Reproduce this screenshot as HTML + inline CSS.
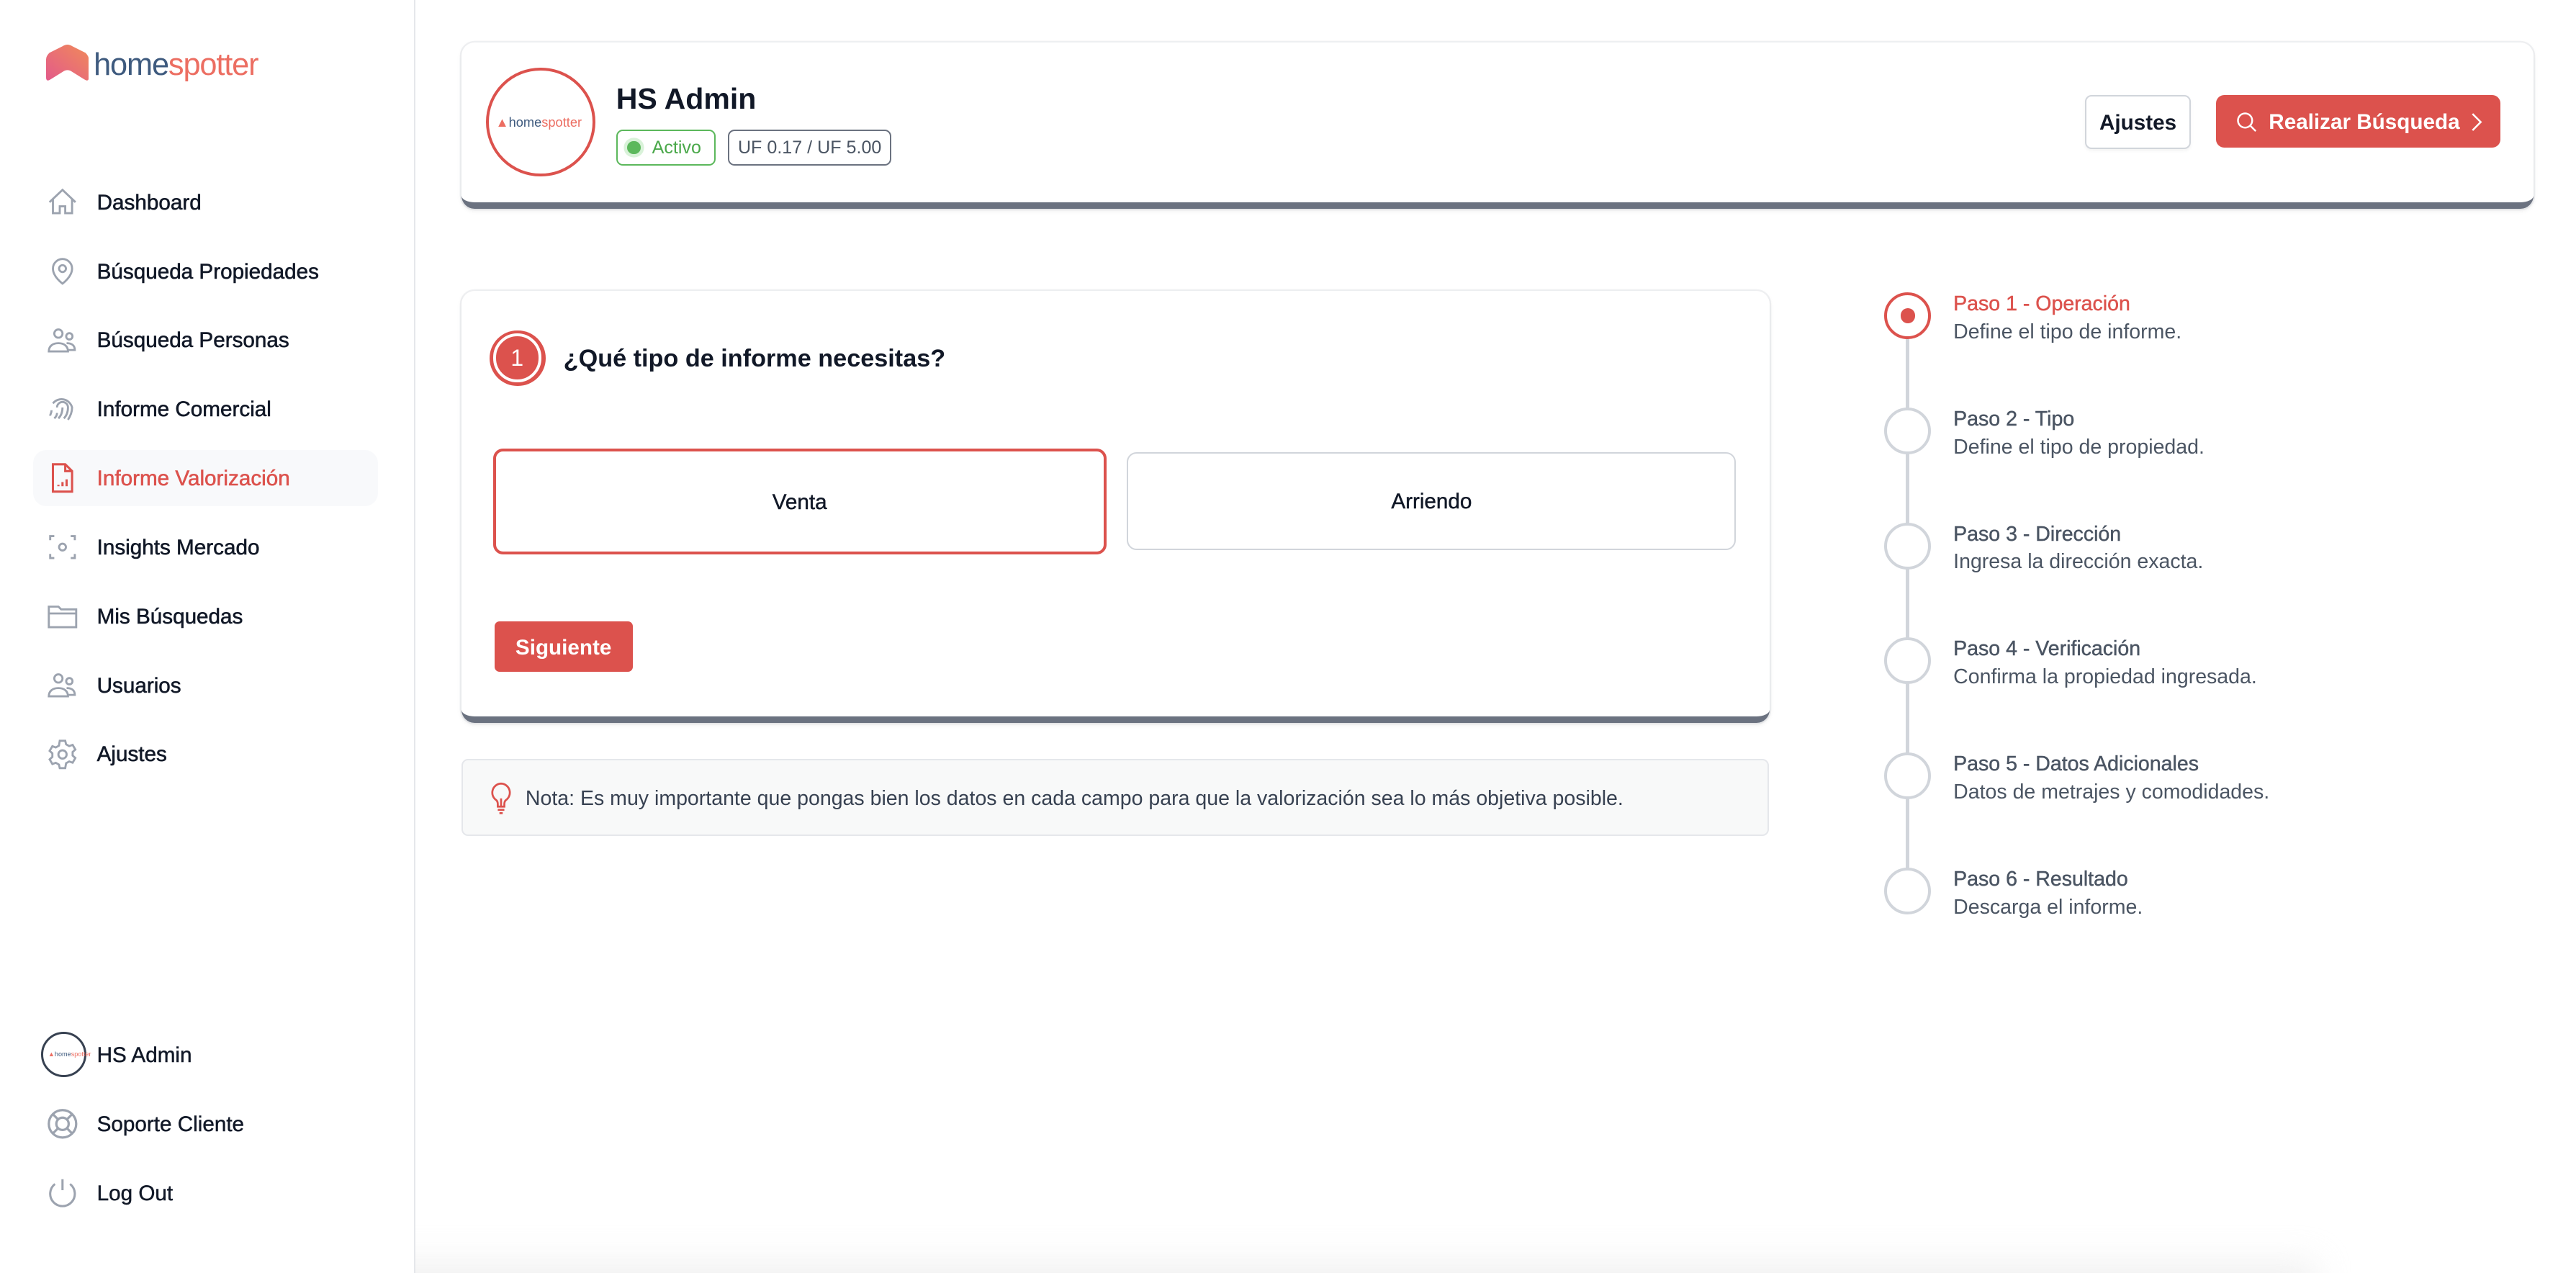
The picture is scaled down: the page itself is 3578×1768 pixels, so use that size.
<!DOCTYPE html>
<html><head><meta charset="utf-8">
<style>
html,body{margin:0;padding:0;background:#fff;width:3578px;height:1768px;overflow:hidden}
#r{zoom:2.2819;width:1568px;height:775px;position:relative;font-family:"Liberation Sans",Arial,sans-serif;color:#111827}
.abs{position:absolute}
.side{left:0;top:0;width:252px;height:775px;border-right:1px solid #e5e7eb;background:#fff}
.nav{position:absolute;left:20px;width:210px;height:34px;display:flex;align-items:center;border-radius:8px;font-size:13px;font-weight:400;color:#111827;-webkit-text-stroke:0.25px #111827}
.nav svg{position:absolute;left:8px;top:7px}
.nav span{position:absolute;left:39px;top:10px}
.nav.act{background:#f8f9fb;color:#dc524d;-webkit-text-stroke:0.25px #dc524d}
.card{background:#fff;border-radius:8px;box-shadow:0 1px 3px rgba(0,0,0,.08),0 0 0 1px #f1f2f4;border-bottom:4px solid #6b7280}
.step{position:absolute;left:1147px;width:300px;height:40px}
.step .c{position:absolute;left:0;top:0;width:25px;height:25px;border:2px solid #d1d5db;border-radius:50%;background:#fff}
.step .t{position:absolute;left:42px;top:-3px;font-size:12.5px;font-weight:500;color:#4b5563;white-space:nowrap;-webkit-text-stroke:0.2px #4b5563}
.step .d{position:absolute;left:42px;top:14px;font-size:12.5px;color:#4b5563;white-space:nowrap}
</style></head><body><div id="r">
<div class="abs" style="left:170px;top:768px;width:1240px;height:30px;background:#e8e8e8;filter:blur(10px);opacity:.6"></div>
<div class="abs side">
  <svg class="abs" style="left:28px;top:27px" width="26" height="24" viewBox="0 0 26 24"><defs><linearGradient id="g" x1="0" y1="1" x2="1" y2="0"><stop offset="0" stop-color="#e35a8a"/><stop offset="1" stop-color="#f08a5a"/></linearGradient></defs><path d="M0 9 Q0 7 2 5 L10 1 Q13 -1 16 1 L24 5 Q26 7 26 9 L26 20 Q26 23 23 21 L15 16 Q13 15 11 16 L3 21 Q0 23 0 20Z" fill="url(#g)"/></svg>
  <div class="abs" style="left:57px;top:29px;font-size:19px;letter-spacing:-.5px"><span style="color:#3e5a7e">home</span><span style="color:#ec6e62">spotter</span></div>

  <div class="nav" style="top:106px"><svg width="20" height="20" viewBox="0 0 24 24" fill="none" stroke="#9ca3af" stroke-width="1.5"><path d="M2.5 12 12 3l9.5 9M5 10v10h5v-5h4v5h5V10"/></svg><span>Dashboard</span></div>
  <div class="nav" style="top:148px"><svg width="20" height="20" viewBox="0 0 24 24" fill="none" stroke="#9ca3af" stroke-width="1.5"><path d="M12 21s-7-5-7-11a7 7 0 0 1 14 0c0 6-7 11-7 11z"/><circle cx="12" cy="10" r="2.5"/></svg><span>Búsqueda Propiedades</span></div>
  <div class="nav" style="top:190px"><svg width="20" height="20" viewBox="0 0 24 24" fill="none" stroke="#9ca3af" stroke-width="1.5"><circle cx="9" cy="7" r="3"/><circle cx="17" cy="9" r="2.3"/><path d="M2 20c0-4 3-6 7-6s7 2 7 6zM15 14c3 0 6 1 6 5h-5"/></svg><span>Búsqueda Personas</span></div>
  <div class="nav" style="top:232px"><svg width="20" height="20" viewBox="0 0 24 24" fill="none" stroke="#9ca3af" stroke-width="1.5"><path d="M5 8a8 8 0 0 1 14 3c0 3-1 6-3 9M8 11a4 4 0 0 1 8 0c0 3-1 6-3 8M12 11c0 3-1 6-3 8M4 13c0 2-1 3-1 4M8 15c0 2-1 3-2 4"/></svg><span>Informe Comercial</span></div>
  <div class="nav act" style="top:274px"><svg width="20" height="20" viewBox="0 0 24 24" fill="none" stroke="#dc524d" stroke-width="1.6"><path d="M5 2h9l5 5v15H5zM14 2v5h5"/><path d="M9 18v-1M12 18v-3M15 18v-5"/></svg><span>Informe Valorización</span></div>
  <div class="nav" style="top:316px"><svg width="20" height="20" viewBox="0 0 24 24" fill="none" stroke="#9ca3af" stroke-width="1.5"><path d="M3 7V4h3M18 4h3v3M21 17v3h-3M6 20H3v-3"/><circle cx="12" cy="12" r="2.5"/></svg><span>Insights Mercado</span></div>
  <div class="nav" style="top:358px"><svg width="20" height="20" viewBox="0 0 24 24" fill="none" stroke="#9ca3af" stroke-width="1.5"><path d="M2 5h7l2 2h11v13H2zM2 10h20"/></svg><span>Mis Búsquedas</span></div>
  <div class="nav" style="top:400px"><svg width="20" height="20" viewBox="0 0 24 24" fill="none" stroke="#9ca3af" stroke-width="1.5"><circle cx="9" cy="7" r="3"/><circle cx="17" cy="9" r="2.3"/><path d="M2 20c0-4 3-6 7-6s7 2 7 6zM15 14c3 0 6 1 6 5h-5"/></svg><span>Usuarios</span></div>
  <div class="nav" style="top:442px"><svg width="20" height="20" viewBox="0 0 24 24" fill="none" stroke="#9ca3af" stroke-width="1.5"><path d="M10 2h4l.6 2.6 2.3 1.3 2.5-.9 2 3.4-2 1.8v2.6l2 1.8-2 3.4-2.5-.9-2.3 1.3L14 22h-4l-.6-2.6-2.3-1.3-2.5.9-2-3.4 2-1.8v-2.6l-2-1.8 2-3.4 2.5.9 2.3-1.3z"/><circle cx="12" cy="12" r="3"/></svg><span>Ajustes</span></div>

  <div class="abs" style="left:25px;top:628px;width:25px;height:25px;border:1.5px solid #374151;border-radius:50%;background:#fff"><div style="position:absolute;left:3px;top:10px;font-size:4px;white-space:nowrap"><span style="color:#ec6e62">▲</span><span style="color:#3e5a7e">home</span><span style="color:#ec6e62">spotter</span></div></div>
  <div class="abs" style="left:59px;top:635px;font-size:13px;-webkit-text-stroke:0.2px #111827">HS Admin</div>
  <svg class="abs" style="left:28px;top:674px" width="20" height="20" viewBox="0 0 24 24" fill="none" stroke="#9ca3af" stroke-width="1.7"><circle cx="12" cy="12" r="10"/><circle cx="12" cy="12" r="4.5"/><path d="M5 5l4 4M19 5l-4 4M5 19l4-4M19 19l-4-4"/></svg>
  <div class="abs" style="left:59px;top:677px;font-size:13px;-webkit-text-stroke:0.2px #111827">Soporte Cliente</div>
  <svg class="abs" style="left:28px;top:716px" width="20" height="20" viewBox="0 0 24 24" fill="none" stroke="#9ca3af" stroke-width="1.6"><path d="M12 2v8M6.5 5.5a9 9 0 1 0 11 0"/></svg>
  <div class="abs" style="left:59px;top:719px;font-size:13px;-webkit-text-stroke:0.2px #111827">Log Out</div>
</div>

<div class="abs card" style="left:281px;top:26px;width:1261px;height:97px">
  <div class="abs" style="left:15px;top:15px;width:63px;height:63px;border:2px solid #dc524d;border-radius:50%;background:#fff"><div style="position:absolute;left:4px;top:27px;font-size:8px;white-space:nowrap"><span style="color:#ec6e62">▲</span><span style="color:#3e5a7e">home</span><span style="color:#ec6e62">spotter</span></div></div>
  <div class="abs" style="left:94px;top:24px;font-size:18px;font-weight:600;color:#111827">HS Admin</div>
  <div class="abs" style="left:94px;top:53px;width:59px;height:20px;border:1px solid #5cb85c;border-radius:4px;font-size:11px;color:#4aa84a;line-height:21px"><span style="position:absolute;left:6px;top:6px;width:8px;height:8px;border-radius:50%;background:#5cb85c;box-shadow:0 0 0 2px #d9f2d9"></span><span style="position:absolute;left:21px">Activo</span></div>
  <div class="abs" style="left:162px;top:53px;width:98px;height:20px;border:1px solid #6b7280;border-radius:4px;font-size:11px;color:#4b5563;line-height:21px;text-align:center">UF 0.17 / UF 5.00</div>
  <div class="abs" style="left:988px;top:32px;width:63px;height:31px;border:1px solid #d1d5db;border-radius:4px;font-size:13px;font-weight:600;text-align:center;line-height:32px;box-shadow:0 1px 2px rgba(0,0,0,.05)">Ajustes</div>
  <div class="abs" style="left:1068px;top:32px;width:173px;height:32px;background:#dc524d;border-radius:5px;color:#fff;font-size:13px;font-weight:600;line-height:33px">
    <svg class="abs" style="left:12px;top:10px" width="13" height="13" viewBox="0 0 24 24" fill="none" stroke="#fff" stroke-width="2"><circle cx="10" cy="10" r="8"/><path d="M16 16l6 6"/></svg>
    <span style="position:absolute;left:32px">Realizar Búsqueda</span>
    <svg class="abs" style="left:155px;top:11px" width="8" height="11" viewBox="0 0 8 11" fill="none" stroke="#fff" stroke-width="1.1"><path d="M1 0.5 6 5.5 1 10.5"/></svg>
  </div>
</div>

<div class="abs card" style="left:281px;top:177px;width:796px;height:259px">
  <div class="abs" style="left:17px;top:24px;width:34px;height:34px;border-radius:50%;background:#dc524d"><div style="position:absolute;left:2px;top:2px;width:26px;height:26px;border:2px solid #fff;border-radius:50%;color:#fff;font-size:14px;text-align:center;line-height:27px">1</div></div>
  <div class="abs" style="left:62px;top:33px;font-size:15px;font-weight:600">¿Qué tipo de informe necesitas?</div>
  <div class="abs" style="left:19px;top:96px;width:370px;height:61px;border:2px solid #dc524d;border-radius:6px;text-align:center;line-height:62px;font-size:13px;-webkit-text-stroke:0.2px #111827">Venta</div>
  <div class="abs" style="left:405px;top:98px;width:369px;height:58px;border:1px solid #d1d5db;border-radius:6px;text-align:center;line-height:59px;font-size:13px;-webkit-text-stroke:0.2px #111827">Arriendo</div>
  <div class="abs" style="left:20px;top:201px;width:84px;height:31px;background:#dc524d;border-radius:3px;color:#fff;font-size:13px;font-weight:600;text-align:center;line-height:32px">Siguiente</div>
</div>

<div class="abs" style="left:281px;top:462px;width:794px;height:45px;background:#f8f9f9;border:1px solid #e5e7eb;border-radius:4px">
  <svg class="abs" style="left:16px;top:13px" width="14" height="20" viewBox="0 0 14 20" fill="none" stroke="#dc524d" stroke-width="1.2"><path d="M7 1a5.5 5.5 0 0 0-3 10c.7.6 1 1.5 1 2.5V15h4v-1.5c0-1 .3-1.9 1-2.5A5.5 5.5 0 0 0 7 1zM5 17h4M6 19h2M7 15v-5"/></svg>
  <div class="abs" style="left:38px;top:16px;font-size:12.5px;color:#374151">Nota: Es muy importante que pongas bien los datos en cada campo para que la valorización sea lo más objetiva posible.</div>
</div>

<div class="abs" style="left:1160px;top:200px;width:2px;height:330px;background:#d1d5db"></div>
<div class="step" style="top:178px"><div class="c" style="border-color:#dc524d"><div style="position:absolute;left:8px;top:8px;width:9px;height:9px;border-radius:50%;background:#dc524d"></div></div><div class="t" style="color:#dc524d;-webkit-text-stroke:0.2px #dc524d;top:0">Paso 1 - Operación</div><div class="d" style="top:17px">Define el tipo de informe.</div></div>
<div class="step" style="top:248px"><div class="c"></div><div class="t" style="top:0">Paso 2 - Tipo</div><div class="d" style="top:17px">Define el tipo de propiedad.</div></div>
<div class="step" style="top:318px"><div class="c"></div><div class="t" style="top:0">Paso 3 - Dirección</div><div class="d" style="top:17px">Ingresa la dirección exacta.</div></div>
<div class="step" style="top:388px"><div class="c"></div><div class="t" style="top:0">Paso 4 - Verificación</div><div class="d" style="top:17px">Confirma la propiedad ingresada.</div></div>
<div class="step" style="top:458px"><div class="c"></div><div class="t" style="top:0">Paso 5 - Datos Adicionales</div><div class="d" style="top:17px">Datos de metrajes y comodidades.</div></div>
<div class="step" style="top:528px"><div class="c"></div><div class="t" style="top:0">Paso 6 - Resultado</div><div class="d" style="top:17px">Descarga el informe.</div></div>
</div></body></html>
